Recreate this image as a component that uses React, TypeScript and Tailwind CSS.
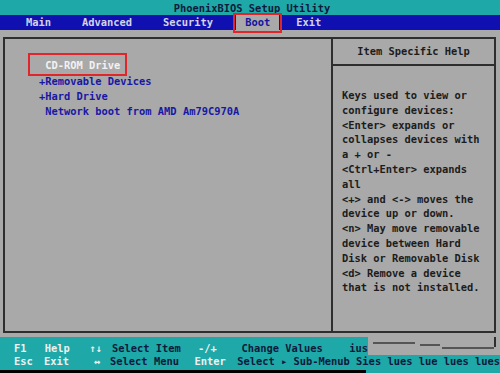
import React from 'react';

const help = [
  'Keys used to view or',
  'configure devices:',
  '<Enter> expands or',
  'collapses devices with',
  'a + or -',
  '<Ctrl+Enter> expands',
  'all',
  '<+> and <-> moves the',
  'device up or down.',
  '<n> May move removable',
  'device between Hard',
  'Disk or Removable Disk',
  '<d> Remove a device',
  'that is not installed.',
];

const App: React.FC = () => {
  return (
    <div
      className="w-[500px] h-[373px] bg-[#a9a9a9] flex flex-col overflow-hidden font-bold text-[10.4px]"
      style={{ fontFamily: '"DejaVu Sans Mono", "Liberation Mono", monospace' }}
    >
      {/* Title */}
      <div className="h-[15px] bg-[#1fa8a8] text-[#0c1a3c] text-center leading-[16px] pl-[4px]">
        PhoenixBIOS Setup Utility
      </div>

      {/* Menu bar */}
      <div className="h-[15px] bg-[#1010b0] text-[#d4d4ea] flex leading-[15px] pl-[26px]">
        <span>Main</span>
        <span className="ml-[31px]">Advanced</span>
        <span className="ml-[31px]">Security</span>
        <span className="relative ml-[23px] px-[9px] bg-[#a9a9a9] text-[#1414a0]">
          Boot
          <span className="absolute -left-[3px] -right-[3px] -top-[2px] -bottom-[3px] border-2 border-[#e0262a]"></span>
        </span>
        <span className="ml-[17px]">Exit</span>
      </div>

      {/* Main area */}
      <div className="flex-1 pt-[7px] pb-[4px] pl-[3px] pr-[4px]">
        <div className="h-full border-2 border-[#2e2e2e] flex">
          {/* Left panel */}
          <div className="flex-1 border-r-2 border-[#2e2e2e] pt-[19px] pl-[34px] text-[#1818a4] leading-[15px] whitespace-pre">
            <div className="relative text-[#f2f2f2]">
              {' CD-ROM Drive'}
              <span className="absolute -left-[11px] w-[99px] -top-[5px] -bottom-[3px] border-2 border-[#e0262a]"></span>
            </div>
            <div className="mt-[1px]">+Removable Devices</div>
            <div>+Hard Drive</div>
            <div>{' Network boot from AMD Am79C970A'}</div>
          </div>

          {/* Right panel */}
          <div className="w-[161px] flex flex-col text-[#1c1c1c]">
            <div className="h-[27px] border-b-2 border-[#2e2e2e] flex items-center justify-center pt-[1px]">
              Item Specific Help
            </div>
            <div className="pt-[22px] pl-[9px] leading-[14.8px] whitespace-pre">
              {help.map((l) => (
                <div key={l}>{l}</div>
              ))}
            </div>
          </div>
        </div>
      </div>

      {/* Bottom bar */}
      <div className="h-[36px] flex flex-col leading-[14px]">
        <div className="flex h-[18px]">
          <div className="w-[368px] bg-[#1fa8a8] pt-[4px] pl-[14px] flex">
            <span className="w-[31px] text-[#f0f0f0]">F1</span>
            <span className="w-[45px] text-[#f0f0f0]">Help</span>
            <span className="w-[23px] text-[#f0f0f0]">↑↓</span>
            <span className="w-[87px] text-[#0c1a3c]">Select Item</span>
            <span className="w-[44px] text-[#f0f0f0]">-/+</span>
            <span className="w-[109px] text-[#0c1a3c]">Change Values</span>
            <span className="text-[#0c1a3c]">ius</span>
          </div>
          <div className="flex-1 relative">
            <div className="absolute left-[5px] w-[42px] top-[5px] h-[2px] bg-[#555]"></div>
            <div className="absolute left-[52px] w-[20px] top-[7px] h-[2px] bg-[#555]"></div>
            <div className="absolute left-[74px] w-[52px] top-[10px] h-[2px] bg-[#555]"></div>
            <div className="absolute right-[4px] w-[2px] top-0 h-[10px] bg-[#2e2e2e]"></div>
          </div>
        </div>
        <div className="bg-[#1fa8a8] flex pl-[14px] h-[15px] leading-[13px] whitespace-pre">
          <span className="w-[31px] text-[#f0f0f0]">Esc</span>
          <span className="w-[45px] text-[#f0f0f0]">Exit</span>
          <span className="w-[23px] text-[#f0f0f0]">{' ↔'}</span>
          <span className="w-[87px] text-[#0c1a3c]">Select Menu</span>
          <span className="w-[44px] text-[#f0f0f0]">Enter</span>
          <span className="text-[#0c1a3c]">{'Select ▸ Sub-Menub Sies lues lue lues lues'}</span>
        </div>
        <div className="flex-1 flex">
          <div className="w-[366px] bg-black"></div>
          <div className="flex-1 bg-[#1fa8a8]"></div>
        </div>
      </div>
    </div>
  );
};

export default App;
